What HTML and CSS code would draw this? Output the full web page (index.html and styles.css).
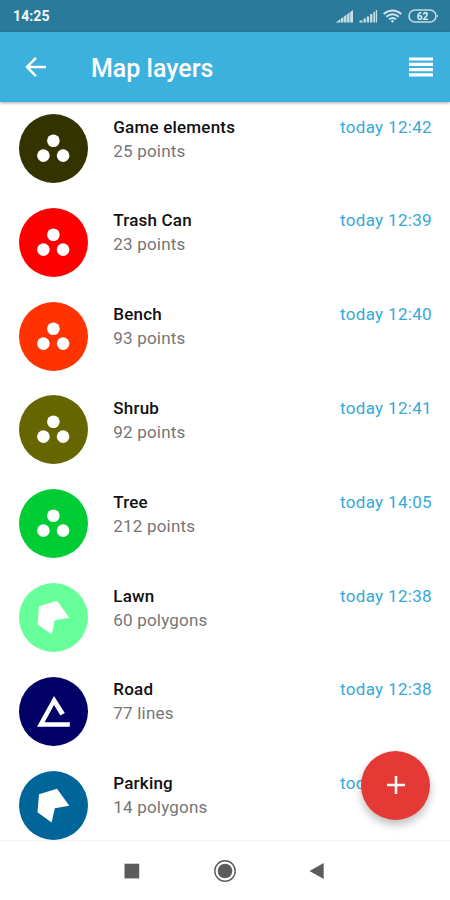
FILE: index.html
```
<!DOCTYPE html>
<html lang="en">
<head>
  <meta charset="utf-8">
  <meta name="viewport" content="width=device-width, initial-scale=1.0">
  <title>Map layers</title>
<link rel="stylesheet" href="styles.css">
</head>
<body>

<!-- shared layer icons -->
<svg class="symbols" width="0" height="0">
  <symbol id="points" viewBox="0 0 69 69">
    <circle cx="34.4" cy="26.7" r="6.3"/>
    <circle cx="24.4" cy="41.6" r="6.3"/>
    <circle cx="44.1" cy="41.6" r="6.3"/>
  </symbol>
  <symbol id="polygons" viewBox="0 0 69 69">
    <path d="M38 17.8 50.3 34.8 35.8 37.3 32.6 51.5 18.5 41.3 20 23.3Z"/>
  </symbol>
  <symbol id="lines" viewBox="0 0 69 69">
    <path d="M35 19 18 49.8H50.8V45.3H25.6L35 28 41.4 38.6 45.8 36Z"/>
  </symbol>
</svg>

<div class="status-bar">
  <span class="clock">14:25</span>
  <svg class="status-icons" width="104" height="16" viewBox="0 0 104 16">
    <g fill="#fff" opacity=".75">
      <path d="M0 14.2 17 2V14.4H0Z"/>
      <path d="M23.5 12.5h3v2h-3zM27.5 10.5h2.3v4h-2.3zM30.8 8.5h2.3v6h-2.3zM34.1 6h2.3v8.5h-2.3zM37.4 3.8h1.7v10.7h-1.7zM39.8 2h1.3v12.5h-1.3z"/>
    </g>
    <g class="bar-gaps">
      <path d="M4.5 9v6M7.6 7v8M10.7 5v10M13.8 3v12"/>
    </g>
    <g class="wifi">
      <path d="M47.7 6Q56.5-1 65.3 6M50.3 8.7Q56.5 3.8 62.7 8.7M53 11.3Q56.5 8.6 60 11.3"/>
      <circle cx="56.5" cy="13.2" r="1.2"/>
    </g>
    <rect class="battery" x="73" y="2" width="27" height="12" rx="6"/>
    <path class="battery-tip" d="M101 6.5Q103 8 101 9.5Z"/>
    <text class="battery-text" x="86.5" y="11.6" text-anchor="middle">62</text>
  </svg>
</div>

<div class="toolbar">
  <svg class="back" width="24" height="22" viewBox="0 0 24 22">
    <path d="M21 11H2.5M11 1.8 2 11 11 20.2"/>
  </svg>
  <h1 class="title">Map layers</h1>
  <svg class="menu" width="24" height="20" viewBox="0 0 24 20">
    <path d="M0 2H24M0 7.3H24M0 12.6H24M0 17.9H24"/>
  </svg>
</div>

<div class="layers">
  <div class="layer">
    <svg class="layer-icon game"><use href="#points"/></svg>
    <div class="layer-text">
      <div class="name">Game elements</div>
      <div class="count">25 points</div>
    </div>
    <div class="time">today 12:42</div>
  </div>
  <div class="layer">
    <svg class="layer-icon trash"><use href="#points"/></svg>
    <div class="layer-text">
      <div class="name">Trash Can</div>
      <div class="count">23 points</div>
    </div>
    <div class="time">today 12:39</div>
  </div>
  <div class="layer">
    <svg class="layer-icon bench"><use href="#points"/></svg>
    <div class="layer-text">
      <div class="name">Bench</div>
      <div class="count">93 points</div>
    </div>
    <div class="time">today 12:40</div>
  </div>
  <div class="layer">
    <svg class="layer-icon shrub"><use href="#points"/></svg>
    <div class="layer-text">
      <div class="name">Shrub</div>
      <div class="count">92 points</div>
    </div>
    <div class="time">today 12:41</div>
  </div>
  <div class="layer">
    <svg class="layer-icon tree"><use href="#points"/></svg>
    <div class="layer-text">
      <div class="name">Tree</div>
      <div class="count">212 points</div>
    </div>
    <div class="time">today 14:05</div>
  </div>
  <div class="layer">
    <svg class="layer-icon lawn"><use href="#polygons"/></svg>
    <div class="layer-text">
      <div class="name">Lawn</div>
      <div class="count">60 polygons</div>
    </div>
    <div class="time">today 12:38</div>
  </div>
  <div class="layer">
    <svg class="layer-icon road"><use href="#lines"/></svg>
    <div class="layer-text">
      <div class="name">Road</div>
      <div class="count">77 lines</div>
    </div>
    <div class="time">today 12:38</div>
  </div>
  <div class="layer">
    <svg class="layer-icon parking"><use href="#polygons"/></svg>
    <div class="layer-text">
      <div class="name">Parking</div>
      <div class="count">14 polygons</div>
    </div>
    <div class="time">today 12:41</div>
  </div>
</div>

<button class="fab" aria-label="Add layer">
  <svg width="20" height="20" viewBox="0 0 20 20"><path d="M10 1V19M1 10H19"/></svg>
</button>

<div class="nav-bar">
  <svg width="24" height="24" viewBox="0 0 24 24"><rect x="4.5" y="4.7" width="14.7" height="14.7"/></svg>
  <svg width="24" height="24" viewBox="0 0 24 24">
    <circle cx="12" cy="12" r="7.3"/>
    <circle class="ring" cx="12" cy="12" r="10.2"/>
  </svg>
  <svg width="24" height="24" viewBox="0 0 24 24"><path d="M3.5 12 17.7 4V20Z"/></svg>
</div>

</body>
</html>
```
FILE: styles.css
```
* {
  box-sizing: border-box;
}
body {
  margin: 0;
  height: 900px;
  display: flex;
  flex-direction: column;
  overflow: hidden;
  background: #fff;
  font-family: Roboto, "Liberation Sans", sans-serif;
}
.symbols {
  position: absolute;
}

.status-bar {
  height: 32px;
  flex: none;
  display: flex;
  align-items: center;
  justify-content: space-between;
  padding: 0 10px 0 13px;
  background: #2a7b9b;
}
.clock {
  color: #f2f8fb;
  font-size: 14px;
  font-weight: 700;
  letter-spacing: 0.1px;
}
.bar-gaps {
  stroke: #2a7b9b;
  stroke-width: 0.6;
}
.wifi {
  fill: none;
  stroke: #d3e4eb;
  stroke-width: 2;
}
.wifi circle {
  fill: #d3e4eb;
  stroke: none;
}
.battery {
  fill: none;
  stroke: #c4dae3;
  stroke-width: 1.6;
}
.battery-tip {
  fill: #c4dae3;
}
.battery-text {
  fill: #e4eff3;
  font-size: 10px;
  font-weight: 700;
}

.toolbar {
  height: 69.5px;
  flex: none;
  display: flex;
  align-items: center;
  padding: 0 17.5px 0 25px;
  background: #3db1de;
  box-shadow: 0 1px 3px rgba(0, 0, 0, 0.35);
  z-index: 1;
}
.back,
.menu {
  fill: none;
  stroke: #fff;
  stroke-width: 2.5;
}
.menu {
  stroke-width: 3.2;
}
.title {
  flex: 1;
  margin: 3px 0 0 42px;
  color: #fff;
  font-size: 25px;
  font-weight: 500;
}

.layers {
  flex: 1;
  min-height: 0;
  overflow: hidden;
}
.layer {
  display: flex;
  height: 93.8px;
  padding: 12.6px 18px 0 19.3px;
}
.layer-icon {
  width: 69px;
  height: 69px;
  flex: none;
  border-radius: 50%;
  fill: #fff;
}
.layer-text {
  flex: 1;
  margin-left: 25px;
}
.name,
.count,
.time {
  font-size: 17px;
  line-height: 24px;
  letter-spacing: 0.2px;
}
.name {
  margin-top: 0.6px;
  color: #111;
  font-weight: 500;
}
.count {
  color: #757575;
}
.time {
  margin-top: 0.6px;
  color: #35a9d8;
  letter-spacing: 0.33px;
}

/* layer colours */
.game { background: #333300; }
.trash { background: #ff0000; }
.bench { background: #ff3300; }
.shrub { background: #666600; }
.tree { background: #00cc33; }
.lawn { background: #66ff99; }
.road { background: #000066; }
.parking { background: #006699; }

.fab {
  position: absolute;
  left: 360.7px;
  top: 750.5px;
  width: 69.7px;
  height: 69.7px;
  display: flex;
  align-items: center;
  justify-content: center;
  padding: 0;
  border: 0;
  border-radius: 50%;
  background: #e53935;
  box-shadow: 0 5px 8px rgba(0, 0, 0, 0.25);
}
.fab svg {
  stroke: #fff;
  stroke-width: 2.5;
}

.nav-bar {
  height: 60px;
  flex: none;
  display: flex;
  justify-content: center;
  align-items: center;
  gap: 69px;
  border-top: 1.5px solid #f3f3f3;
  background: #fff;
  fill: #5c5c5c;
}
.ring {
  fill: none;
  stroke: #5c5c5c;
  stroke-width: 1.4;
}
```
